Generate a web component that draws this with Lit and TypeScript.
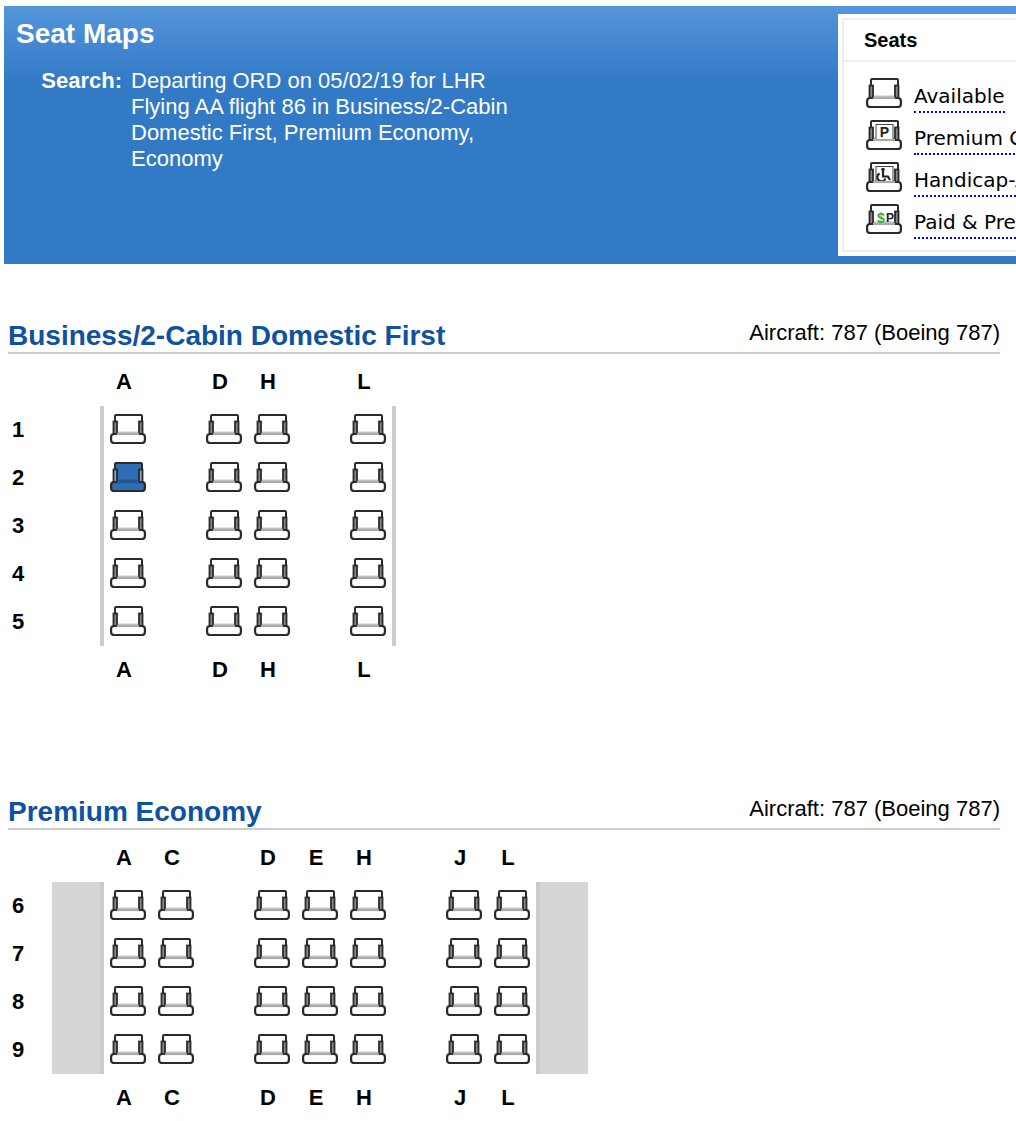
import { LitElement, css, html, nothing, svg } from "lit";
import { customElement, property } from "lit/decorators.js";

type Mark = "" | "P" | "H" | "$";

const seatMark = (mark: Mark) => {
  if (mark === "P") {
    return svg`<rect x="10" y="4.500" width="17" height="15" fill="#fff" stroke="#444" stroke-width="1"/>
      <text x="18.500" y="17" class="mark">P</text>`;
  }
  if (mark === "H") {
    return svg`<rect x="10" y="4.500" width="17" height="15" fill="#fff" stroke="#444" stroke-width="1"/>
      <circle cx="17" cy="7.500" r="1.800" fill="#222"/>
      <path d="M17 9v5.500h5l2 3.500M13.500 11.500a4.200 4.200 0 1 0 6 5" fill="none" stroke="#222" stroke-width="2.200"/>`;
  }
  if (mark === "$") {
    return svg`<text x="15" y="19" class="mark green">$</text><text x="24" y="18" class="mark thin">P</text>`;
  }
  return nothing;
};

@customElement("seat-icon")
class SeatIcon extends LitElement {
  @property() mark: Mark = "";
  @property({ type: Boolean }) taken = false;

  static styles = css`
    :host {
      display: block;
      width: 36px;
      height: 30px;
    }
    svg {
      display: block;
    }
    .mark {
      font: bold 14px "Liberation Sans", sans-serif;
      text-anchor: middle;
      fill: #222;
    }
    .thin {
      font-size: 12px;
    }
    .green {
      fill: #22b14c;
    }
  `;

  render() {
    const fill = this.taken ? "#2f6db5" : "#fff";
    const arm = this.taken ? "#8fa9c7" : "#8a8a8a";
    return html`<svg width="36" height="30" viewBox="0 0 36 30">
      <path d="M5 20V2a1 1 0 0 1 1-1h25a1 1 0 0 1 1 1v18z" fill=${fill}/>
      <path d="M5 8V2a1 1 0 0 1 1-1h25a1 1 0 0 1 1 1v6" fill="none" stroke="#2a2a2a" stroke-width="2"/>
      <path d="M8 18.500h20" stroke=${this.taken ? "#24578f" : "#c4c4c4"} stroke-width="2"/>
      ${seatMark(this.mark)}
      <rect x="3.500" y="7.500" width="3.500" height="13" fill=${arm} stroke="#2a2a2a" stroke-width="1.800"/>
      <rect x="29" y="7.500" width="3.500" height="13" fill=${arm} stroke="#2a2a2a" stroke-width="1.800"/>
      <rect x="1.100" y="20" width="33.800" height="9" rx="3" fill=${fill} stroke="#2a2a2a" stroke-width="2.200"/>
      <path d="M7 20h22" stroke=${this.taken ? "#24578f" : "#aaa"} stroke-width="2.200"/>
    </svg>`;
  }
}

interface Cabin {
  name: string;
  rows: number[];
  columns: string[]; // empty string is an aisle
  wings?: boolean;
  taken?: string;
}

const CABINS: Cabin[] = [
  {
    name: "Business/2-Cabin Domestic First",
    rows: [1, 2, 3, 4, 5],
    columns: ["A", "", "D", "H", "", "L"],
    taken: "2A",
  },
  {
    name: "Premium Economy",
    rows: [6, 7, 8, 9],
    columns: ["A", "C", "", "D", "E", "H", "", "J", "L"],
    wings: true,
  },
];

const LEGEND: { mark: Mark; label: string }[] = [
  { mark: "", label: "Available" },
  { mark: "P", label: "Premium Coach" },
  { mark: "H", label: "Handicap-Accessible" },
  { mark: "$", label: "Paid & Preferred" },
];

@customElement("app-root")
class AppRoot extends LitElement {
  static styles = css`
    :host {
      display: block;
      width: 1016px;
      height: 1121px;
      overflow: hidden;
      background: #fff;
      font-family: "Liberation Sans", Arial, sans-serif;
      color: #000;
    }
    .banner {
      display: flex;
      justify-content: space-between;
      height: 258px;
      margin: 6px 0 0 4px;
      background: linear-gradient(#5596dc, #337ac6 75px);
      color: #fff;
      overflow: hidden;
    }
    .intro {
      padding: 12px 0 0 12px;
    }
    h1 {
      margin: 0;
      font-size: 28px;
      line-height: 32px;
      font-weight: bold;
    }
    .search {
      display: flex;
      gap: 9px;
      margin-top: 18px;
      font-size: 22px;
      line-height: 26px;
    }
    .search b {
      width: 106px;
      text-align: right;
    }
    .legend {
      flex: none;
      box-sizing: border-box;
      width: 300px;
      margin: 8px -122px 8px 0;
      padding: 4px;
      background: #fff;
      color: #000;
    }
    .legend-box {
      height: 234px;
      border: 2px solid #eee;
      box-sizing: border-box;
    }
    .legend h2 {
      margin: 0;
      height: 40px;
      padding-left: 20px;
      font-size: 20px;
      line-height: 40px;
      font-weight: bold;
      border-bottom: 2px solid #eee;
    }
    .legend ul {
      margin: 0;
      padding: 16px 0 0 22px;
      list-style: none;
    }
    .legend li {
      display: flex;
      gap: 12px;
      height: 42px;
      white-space: nowrap;
    }
    .legend span {
      height: 30px;
      margin-top: 3px;
      font: 20px/31px "DejaVu Sans", Verdana, sans-serif;
      border-bottom: 2px dotted #00f;
    }
    .cabin {
      margin: 0 16px 0 8px;
    }
    .cabin-head {
      display: flex;
      justify-content: space-between;
      align-items: flex-end;
      height: 34px;
      border-bottom: 2px solid #ccc;
    }
    .cabin-head h2 {
      margin: 0;
      font-size: 28px;
      line-height: 32px;
      color: #0f52a0;
      font-weight: bold;
    }
    .cabin-head span {
      font-size: 22px;
      line-height: 38px;
      align-self: flex-start;
      margin-top: -4px;
    }
    .first {
      margin-top: 54px;
    }
    .second {
      margin-top: 100px;
    }
    .map {
      margin-top: 4px;
      font-size: 22px;
      font-weight: bold;
    }
    .letters,
    .row {
      display: flex;
      height: 48px;
    }
    .letters {
      padding-left: 92px;
    }
    .cell {
      flex: none;
      width: 48px;
      display: flex;
      align-items: center;
      justify-content: center;
    }
    .cell seat-icon {
      margin-bottom: 2px;
    }
    .num {
      flex: none;
      width: 44px;
      padding-left: 4px;
      box-sizing: border-box;
      line-height: 48px;
    }
    .wing {
      flex: none;
      width: 48px;
    }
    .wing.on {
      background: #d6d6d6;
    }
    .bar {
      flex: none;
      width: 4px;
      background: #ccc;
    }
  `;

  renderCabin(cabin: Cabin, index: number) {
    const letters = html`<div class="letters">
      ${cabin.columns.map((c) => html`<div class="cell">${c}</div>`)}
    </div>`;
    const wing = html`<div class="wing ${cabin.wings ? "on" : ""}"></div>`;
    return html`<section class="cabin ${index ? "second" : "first"}">
      <div class="cabin-head">
        <h2>${cabin.name}</h2>
        <span>Aircraft: 787 (Boeing 787)</span>
      </div>
      <div class="map">
        ${letters}
        ${cabin.rows.map(
          (row) => html`<div class="row">
            <div class="num">${row}</div>
            ${wing}
            <div class="bar"></div>
            ${cabin.columns.map(
              (c) => html`<div class="cell">
                ${c
                  ? html`<seat-icon ?taken=${cabin.taken === `${row}${c}`}></seat-icon>`
                  : nothing}
              </div>`
            )}
            <div class="bar"></div>
            ${wing}
          </div>`
        )}
        ${letters}
      </div>
    </section>`;
  }

  render() {
    return html`
      <header class="banner">
        <div class="intro">
          <h1>Seat Maps</h1>
          <div class="search">
            <b>Search:</b>
            <div>
              <div>Departing ORD on 05/02/19 for LHR</div>
              <div>Flying AA flight 86 in Business/2-Cabin</div>
              <div>Domestic First, Premium Economy,</div>
              <div>Economy</div>
            </div>
          </div>
        </div>
        <aside class="legend">
          <div class="legend-box">
            <h2>Seats</h2>
            <ul>
              ${LEGEND.map(
                (item) => html`<li>
                  <seat-icon .mark=${item.mark}></seat-icon>
                  <span>${item.label}</span>
                </li>`
              )}
            </ul>
          </div>
        </aside>
      </header>
      ${CABINS.map((cabin, i) => this.renderCabin(cabin, i))}
    `;
  }
}
